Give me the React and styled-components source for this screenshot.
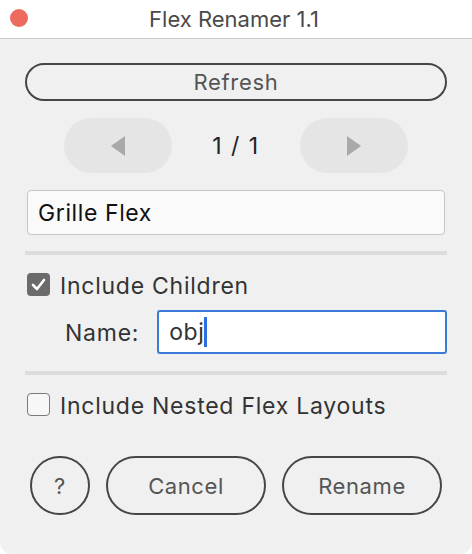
import styled, { createGlobalStyle } from "styled-components";

const Global = createGlobalStyle`
  html, body {
    margin: 0;
    padding: 0;
    background: #ffffff;
  }
  body {
    font-family: Inter, "Noto Sans", "Liberation Sans", sans-serif;
  }
`;

const App = () => {
  return (
    <>
      <Global />
      <S.Window>
        <S.TitleBar>
          <S.CloseDot />
          <S.Title>Flex Renamer 1.1</S.Title>
        </S.TitleBar>
        <S.Body>
          <S.PillButton>Refresh</S.PillButton>
          <S.NavRow>
            <S.NavButton>
              <svg width="18" height="22" viewBox="0 0 18 22">
                <path d="M16 1 L2 11 L16 21 Z" fill="#a9a9a9" />
              </svg>
            </S.NavButton>
            <S.Counter>1 / 1</S.Counter>
            <S.NavButton>
              <svg width="18" height="22" viewBox="0 0 18 22">
                <path d="M2 1 L16 11 L2 21 Z" fill="#a9a9a9" />
              </svg>
            </S.NavButton>
          </S.NavRow>
          <S.Field>Grille Flex</S.Field>
          <S.Divider />
          <S.CheckRow>
            <S.Box $checked>
              <svg width="15" height="13" viewBox="0 0 15 13">
                <path d="M2 7 L6 11 L13 2" stroke="#fff" strokeWidth="2.6" fill="none" strokeLinecap="round" strokeLinejoin="round" />
              </svg>
            </S.Box>
            <S.Label>Include Children</S.Label>
          </S.CheckRow>
          <S.NameRow>
            <S.Label>Name:</S.Label>
            <S.Input>
              obj<S.Caret />
            </S.Input>
          </S.NameRow>
          <S.Divider $top={17} />
          <S.CheckRow>
            <S.Box />
            <S.Label>Include Nested Flex Layouts</S.Label>
          </S.CheckRow>
          <S.ButtonRow>
            <S.RoundButton $w={60}>?</S.RoundButton>
            <S.RoundButton $w={160}>Cancel</S.RoundButton>
            <S.RoundButton $w={160}>Rename</S.RoundButton>
          </S.ButtonRow>
        </S.Body>
      </S.Window>
    </>
  );
};

export default App;

const S = {
  Window: styled.div`
    width: 472px;
    height: 554px;
    background: #f0f0f0;
    border-radius: 0 0 12px 12px;
    overflow: hidden;
    display: flex;
    flex-direction: column;
  `,

  TitleBar: styled.div`
    height: 38px;
    background: #ffffff;
    border-bottom: 1px solid #c8c8c8;
    display: flex;
    align-items: center;
    justify-content: center;
    position: relative;
  `,

  CloseDot: styled.div`
    position: absolute;
    left: 10px;
    top: 9px;
    width: 18px;
    height: 18px;
    border-radius: 50%;
    background: #ec6a5e;
  `,

  Title: styled.div`
    font-size: 22px;
    color: #4a4a4a;
    margin-top: -1px;
    margin-right: 4px;
  `,

  Body: styled.div`
    display: flex;
    flex-direction: column;
    padding: 24px 25px 0 25px;
  `,

  PillButton: styled.div`
    height: 38px;
    box-sizing: border-box;
    border: 2px solid #464646;
    border-radius: 19px;
    display: flex;
    align-items: center;
    justify-content: center;
    font-size: 22px;
    letter-spacing: 0.7px;
    color: #555555;
  `,

  NavRow: styled.div`
    margin-top: 17px;
    display: flex;
    align-items: center;
    justify-content: center;
  `,

  NavButton: styled.div`
    width: 108px;
    height: 55px;
    border-radius: 28px;
    background: #e5e5e5;
    display: flex;
    align-items: center;
    justify-content: center;
  `,

  Counter: styled.div`
    width: 128px;
    text-align: center;
    font-size: 23px;
    letter-spacing: 1.5px;
    color: #222222;
  `,

  Field: styled.div`
    margin: 17px 2px 0 2px;
    height: 45px;
    box-sizing: border-box;
    background: #fafafa;
    border: 1px solid #c6c6c6;
    border-radius: 4px;
    display: flex;
    align-items: center;
    padding-left: 10px;
    font-size: 23px;
    letter-spacing: 0.6px;
    color: #111111;
  `,

  Divider: styled.div`
    margin-top: ${(p) => p.$top ?? 16}px;
    height: 4px;
    background: #dcdcdc;
  `,

  CheckRow: styled.div`
    margin-top: 18px;
    margin-left: 2px;
    height: 23px;
    display: flex;
    align-items: flex-start;
    gap: 10px;
  `,

  Box: styled.div`
    width: 23px;
    height: 23px;
    box-sizing: border-box;
    border-radius: 4px;
    background: ${(p) => (p.$checked ? "#6b6b6b" : "#f7f7f7")};
    border: ${(p) => (p.$checked ? "none" : "1.5px solid #7a7a7a")};
    display: flex;
    align-items: center;
    justify-content: center;
  `,

  Label: styled.div`
    padding-top: 2px;
    font-size: 23px;
    line-height: 23px;
    letter-spacing: 0.75px;
    color: #333333;
  `,

  NameRow: styled.div`
    margin-top: 14px;
    height: 44px;
    padding-left: 40px;
    display: flex;
    align-items: center;
    gap: 18px;
  `,

  Input: styled.div`
    flex: 1;
    height: 44px;
    box-sizing: border-box;
    background: #ffffff;
    border: 2px solid #3b7ad9;
    border-radius: 3px;
    display: flex;
    align-items: center;
    padding-left: 10px;
    font-size: 23px;
    letter-spacing: 0.6px;
    color: #333333;
  `,

  Caret: styled.span`
    display: inline-block;
    width: 3px;
    height: 30px;
    background: #2f6fe0;
  `,

  ButtonRow: styled.div`
    margin-top: 40px;
    padding: 0 5px;
    display: flex;
    gap: 16px;
  `,

  RoundButton: styled.div`
    width: ${(p) => p.$w}px;
    height: 59px;
    box-sizing: border-box;
    border: 2px solid #464646;
    border-radius: 30px;
    display: flex;
    align-items: center;
    justify-content: center;
    font-size: 22px;
    letter-spacing: 0.6px;
    color: #555555;
  `,
};
